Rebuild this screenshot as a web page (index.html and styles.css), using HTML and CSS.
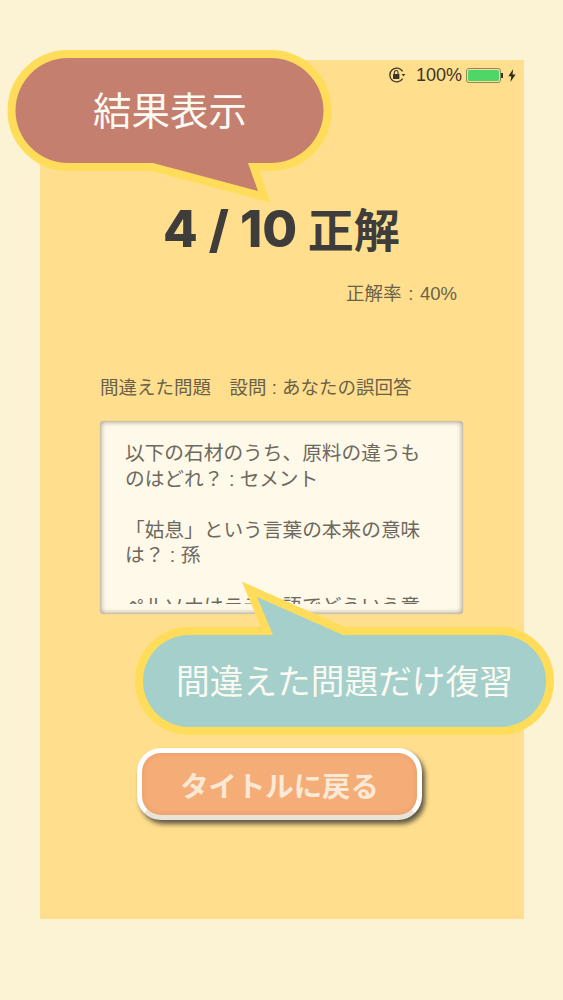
FILE: index.html
```html
<!DOCTYPE html>
<html lang="ja">
<head>
<meta charset="utf-8">
<title>結果表示</title>
<link rel="stylesheet" href="styles.css">
</head>
<body>
<main class="panel">
  <div class="status">
    <svg class="lock" viewBox="0 0 18 18" width="18" height="18" aria-hidden="true">
      <path d="M14.600 12.600A6.900 6.900 0 1 1 14.600 5.400" fill="none" stroke="#3b3528" stroke-width="1.300"/>
      <path d="M13.600 8h3.800l-1.900 2.400z" fill="#3b3528"/>
      <rect x="5" y="8" width="6.400" height="5" rx=".6" fill="#3b3528"/>
      <path d="M6.300 8V6.400a1.900 1.900 0 0 1 3.800 0V8" fill="none" stroke="#3b3528" stroke-width="1.100"/>
    </svg>
    <span class="pct">100%</span>
    <span class="battery"><span class="cell"></span></span>
    <span class="nub"></span>
    <svg class="bolt" viewBox="0 0 8 13" width="8" height="13" aria-hidden="true">
      <path d="M5.200 0 .4 7.200h2.900L2.400 13l5.200-7.600H4.500z" fill="#2e2a20"/>
    </svg>
  </div>
  <h1 class="score"><span class="score-num">4 / 10</span> 正解</h1>
  <p class="rate">正解率 : 40%</p>
  <p class="label">間違えた問題　設問 : あなたの誤回答</p>
  <section class="box">
    <div class="scroll">
      <p>以下の石材のうち、原料の違うものはどれ？ : セメント</p>
      <p>「姑息」という言葉の本来の意味は？ : 孫</p>
      <p>ペルソナはラテン語でどういう意味？ : 仮面</p>
    </div>
  </section>
  <button class="back">タイトルに戻る</button>
</main>

<div class="bubble bubble-top">
  <svg class="shape" viewBox="0 0 340 170" width="340" height="170" aria-hidden="true">
    <path class="shape-top" d="M68 18H271A52.500 52.500 0 0 1 271 123H248L258 151L153 123H68A52.500 52.500 0 0 1 68 18Z"/>
  </svg>
  <span class="bubble-text text-top">結果表示</span>
</div>

<div class="bubble bubble-bottom">
  <svg class="shape" viewBox="0 0 440 170" width="440" height="170" aria-hidden="true">
    <path class="shape-bottom" d="M66 65H150L134 27L220 65H377A46 46 0 0 1 377 157H66A46 46 0 0 1 66 65Z"/>
  </svg>
  <span class="bubble-text text-bottom">間違えた問題だけ復習</span>
</div>
</body>
</html>
```

FILE: styles.css
```css
* { box-sizing: border-box; }
html, body { margin: 0; height: 1000px; overflow: hidden; }
body {
  position: relative;
  padding: 60px 39px 81px 40px;
  background: #fcf3d5;
  font-family: "Liberation Sans", "Noto Sans CJK JP", sans-serif;
  color: #6a614b;
}
.panel {
  height: 859px;
  padding: 6px 22px 0 60px;
  background: #ffdf8d;
  display: flex;
  flex-direction: column;
  align-items: flex-start;
}
.status {
  align-self: flex-end;
  display: flex;
  align-items: center;
  height: 18px;
  margin-right: -14px;
  color: #3b3528;
}
.lock { margin-right: 10px; }
.pct { font: 18px/18px "Liberation Sans", sans-serif; }
.battery {
  width: 35px;
  height: 15px;
  margin-left: 4px;
  padding: 1px;
  border: 1px solid #8d8a5e;
  border-radius: 3px;
}
.cell { display: block; height: 100%; background: #4fd667; border-radius: 1.500px; }
.nub { width: 2px; height: 5px; background: #3b3528; margin-right: 5px; }
.score {
  align-self: flex-start;
  height: 56px;
  margin: 115px 0 0 63px;
  font-family: "Noto Sans CJK JP", sans-serif;
  font-size: 46px;
  line-height: 56px;
  font-weight: 700;
  color: #3f3d3b;
  white-space: nowrap;
}
.score-num {
  font-family: "Inter", sans-serif;
  font-size: 50.500px;
  font-weight: 800;
  line-height: 1;
}
.rate {
  align-self: flex-end;
  margin: 26px 45px 0 0;
  font-size: 18.500px;
  line-height: 26px;
  word-spacing: 1.500px;
}
.label {
  margin: 68px 0 0;
  font-size: 18.500px;
  line-height: 26px;
  white-space: nowrap;
}
.box {
  width: 363px;
  height: 193px;
  margin-top: 20px;
  padding: 20px 25px 10px;
  background: #fff9e9;
  border-radius: 4px;
  box-shadow: inset 0 0 5px 1px #a59d88, 0 0 1px #a59d88;
}
.scroll { height: 163px; overflow: hidden; }
.scroll p {
  margin: 0 0 25.500px;
  font-size: 19.700px;
  line-height: 25.500px;
  color: #6d695f;
}
.back {
  width: 285px;
  height: 72px;
  margin: 134px 0 0 37px;
  background: #f5ad78;
  border: 5px solid #fff;
  border-bottom-color: #e8e4d8;
  border-radius: 24px;
  box-shadow: 3px 4px 5px #5f5646, inset 0 0 6px #e89a66;
  font-family: inherit;
  font-size: 28.400px;
  font-weight: 700;
  color: #fbe9d6;
  padding: 0;
}
.bubble { position: absolute; }
.bubble-top { left: 0; top: 40px; width: 340px; height: 170px; }
.bubble-bottom { left: 123px; top: 570px; width: 440px; height: 170px; }
.shape { display: block; }
.shape path {
  stroke: #ffdc59;
  stroke-width: 16px;
  stroke-linejoin: miter;
  stroke-miterlimit: 8;
  paint-order: stroke;
}
.shape-top { fill: #c47f6f; }
.shape-bottom { fill: #a4cfca; }
.bubble-text { position: absolute; white-space: nowrap; color: #fbfaf3; font-family: "Noto Sans CJK JP", sans-serif; }
.text-top { left: 93px; top: 40px; font-size: 38.500px; line-height: 56px; }
.text-bottom { left: 53px; top: 85px; font-size: 33.700px; line-height: 50px; }
```
